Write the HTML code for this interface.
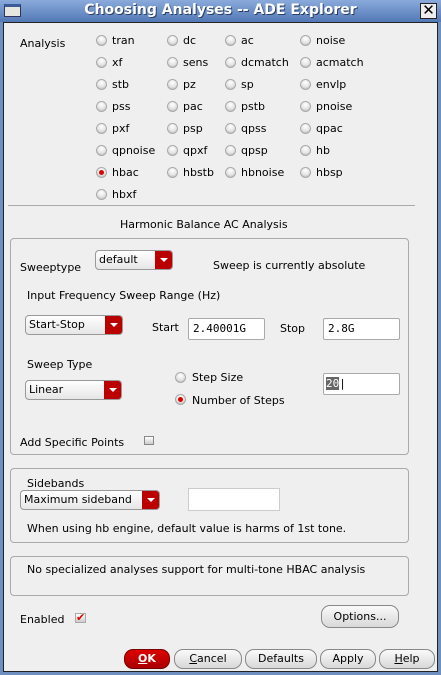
<!DOCTYPE html>
<html><head><meta charset="utf-8"><style>
*{margin:0;padding:0;box-sizing:border-box}
body{width:441px;height:675px;background:#6f8fc0;font-family:"DejaVu Sans","Liberation Sans",sans-serif;font-size:11px;color:#000;position:relative;overflow:hidden}
.a{position:absolute;white-space:nowrap}
#title{left:0;top:0;width:441px;height:22px;background:linear-gradient(#8aaadb,#5278b6);}
#title .t{left:0;width:441px;top:2px;text-align:center;color:#fff;font-weight:bold;font-size:14px;text-shadow:1px 1px 0 #2a3e66}
#client{left:3px;top:22px;width:435px;height:650px;background:#efefef;border:1px solid #222}
.r{position:absolute;width:11px;height:11px;border-radius:50%;border:1px solid #aaa;background:radial-gradient(circle at 50% 30%,#fff,#e4e4e4 55%,#aaa);}
.r.on::after{content:"";position:absolute;left:2px;top:2px;width:5px;height:5px;border-radius:50%;background:#d00}
.grp{position:absolute;border:1px solid #aaa;border-radius:4px}
.cb{position:absolute;height:20px;border:1px solid #999;border-radius:4px;background:linear-gradient(#fff,#e6e6e6);padding-left:3px;line-height:18px}
.cb i{position:absolute;right:0;top:0;width:17px;height:18px;background:#b00;border-radius:0 3px 3px 0}
.cb i::after{content:"";position:absolute;left:5px;top:7px;border-left:4px solid transparent;border-right:4px solid transparent;border-top:4px solid #fff}
.in{position:absolute;background:#fff;border:1px solid #aaa;border-radius:2px;height:22px;font-family:"DejaVu Sans Mono","Liberation Mono",monospace;padding-left:4px;line-height:20px}
.btn{position:absolute;height:20px;border:1px solid #888;border-radius:9px;background:linear-gradient(#fafafa,#d8d8d8);text-align:center;line-height:18px}
</style></head><body>
<div id="title" class="a"><div class="a" style="left:4px;top:4px;width:17px;height:13px;border:1px solid #335;background:#e6e6e0;border-top:3px solid #3a5a9a"></div><div class="a t">Choosing Analyses -- ADE Explorer</div><div class="a" style="left:420px;top:3px;width:17px;height:16px;border:1px solid #222;background:#eee;font-size:15px;line-height:13px;text-align:center">✕</div></div>
<div id="client" class="a"></div>
<div class="a" style="left:20px;top:37px">Analysis</div>
<div id="radios"></div>
<div class="a" style="left:8px;top:205px;width:407px;height:1px;background:#aaa"></div>
<div class="a" style="left:120px;top:218px">Harmonic Balance AC Analysis</div>
<div class="grp" style="left:10px;top:238px;width:399px;height:217px"></div>
<div class="a" style="left:20px;top:261px">Sweeptype</div>
<div class="cb" style="left:95px;top:250px;width:78px">default<i></i></div>
<div class="a" style="left:213px;top:259px">Sweep is currently absolute</div>
<div class="a" style="left:27px;top:289px">Input Frequency Sweep Range (Hz)</div>
<div class="cb" style="left:25px;top:315px;width:98px">Start-Stop<i></i></div>
<div class="a" style="left:152px;top:321px">Start</div>
<div class="in" style="left:188px;top:318px;width:77px">2.40001G</div>
<div class="a" style="left:280px;top:322px">Stop</div>
<div class="in" style="left:323px;top:318px;width:77px">2.8G</div>
<div class="a" style="left:27px;top:358px">Sweep Type</div>
<div class="cb" style="left:25px;top:380px;width:97px">Linear<i></i></div>
<div class="r" style="left:175px;top:372px"></div><div class="a" style="left:192px;top:371px">Step Size</div>
<div class="r on" style="left:175px;top:394px"></div><div class="a" style="left:192px;top:394px">Number of Steps</div>
<div class="in" style="left:323px;top:373px;width:77px;padding-left:2px"><span style="background:#666;color:#fff">20</span>|</div>
<div class="a" style="left:20px;top:436px">Add Specific Points</div>
<div class="a" style="left:144px;top:436px;width:10px;height:9px;border:1px solid #888;background:linear-gradient(#fff,#ccc)"></div>
<div class="grp" style="left:10px;top:468px;width:399px;height:75px"></div>
<div class="a" style="left:27px;top:477px">Sidebands</div>
<div class="cb" style="left:20px;top:490px;width:140px">Maximum sideband<i></i></div>
<div class="a" style="left:188px;top:488px;width:92px;height:23px;background:#fff;border:1px solid #ccc"></div>
<div class="a" style="left:27px;top:522px">When using hb engine, default value is harms of 1st tone.</div>
<div class="grp" style="left:10px;top:556px;width:399px;height:40px"></div>
<div class="a" style="left:27px;top:563px">No specialized analyses support for multi-tone HBAC analysis</div>
<div class="a" style="left:20px;top:613px">Enabled</div>
<div class="a" style="left:75px;top:613px;width:11px;height:10px;background:linear-gradient(#fff,#ccc);border:1px solid #aaa;color:#d00;font-size:11px;line-height:8px;font-weight:bold">✔</div>
<div class="btn" style="left:321px;top:605px;width:78px;height:23px;line-height:21px">Options...</div>
<div class="btn" style="left:124px;top:649px;width:46px;background:linear-gradient(#d00,#a00);color:#fff;font-weight:bold;border-color:#700"><u>O</u>K</div>
<div class="btn" style="left:174px;top:649px;width:68px"><u>C</u>ancel</div>
<div class="btn" style="left:245px;top:649px;width:72px">Defaults</div>
<div class="btn" style="left:320px;top:649px;width:56px">Apply</div>
<div class="btn" style="left:379px;top:649px;width:56px"><u>H</u>elp</div>
<script>
var cols=[96,167,225,300],rows=[40,62,84,106,128,150,172,194];
var names=[["tran","dc","ac","noise"],["xf","sens","dcmatch","acmatch"],["stb","pz","sp","envlp"],["pss","pac","pstb","pnoise"],["pxf","psp","qpss","qpac"],["qpnoise","qpxf","qpsp","hb"],["hbac","hbstb","hbnoise","hbsp"],["hbxf"]];
var h="";names.forEach(function(r,i){r.forEach(function(n,j){var on=n=="hbac"?" on":"";h+='<div class="r'+on+'" style="left:'+cols[j]+'px;top:'+(rows[i]-5)+'px"></div><div class="a" style="left:'+(cols[j]+16)+'px;top:'+(rows[i]-6)+'px">'+n+'</div>';});});
document.getElementById("radios").innerHTML=h;
</script>
</body></html>
